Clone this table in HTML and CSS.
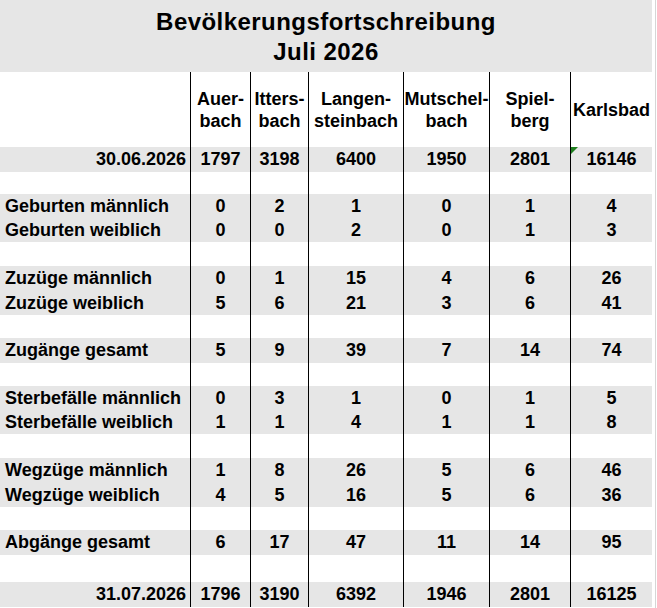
FILE: index.html
```html
<!DOCTYPE html>
<html lang="de">
<head>
<meta charset="utf-8">
<title>Bevölkerungsfortschreibung Juli 2026</title>
<link rel="stylesheet" href="styles.css">
</head>
<body>
<div class="page">
  <div class="sheet">
    <div class="title">
      <div>Bevölkerungsfortschreibung</div>
      <div>Juli 2026</div>
    </div>

    <div class="row head">
      <div class="lbl"></div>
      <div class="n">Auer-<br>bach</div>
      <div class="n">Itters-<br>bach</div>
      <div class="n">Langen-<br>steinbach</div>
      <div class="n">Mutschel-<br>bach</div>
      <div class="n">Spiel-<br>berg</div>
      <div class="n">Karlsbad</div>
    </div>

    <div class="row h25 g">
      <div class="lbl date">30.06.2026</div>
      <div class="n">1797</div><div class="n">3198</div><div class="n">6400</div><div class="n">1950</div><div class="n">2801</div><div class="n flag">16146</div>
    </div>
    <div class="row h22"><div class="lbl"></div><div class="n"></div><div class="n"></div><div class="n"></div><div class="n"></div><div class="n"></div><div class="n"></div></div>

    <div class="row h24 g">
      <div class="lbl">Geburten männlich</div>
      <div class="n">0</div><div class="n">2</div><div class="n">1</div><div class="n">0</div><div class="n">1</div><div class="n">4</div>
    </div>
    <div class="row h24 g">
      <div class="lbl">Geburten weiblich</div>
      <div class="n">0</div><div class="n">0</div><div class="n">2</div><div class="n">0</div><div class="n">1</div><div class="n">3</div>
    </div>
    <div class="row h24"><div class="lbl"></div><div class="n"></div><div class="n"></div><div class="n"></div><div class="n"></div><div class="n"></div><div class="n"></div></div>

    <div class="row h25 g">
      <div class="lbl">Zuzüge männlich</div>
      <div class="n">0</div><div class="n">1</div><div class="n">15</div><div class="n">4</div><div class="n">6</div><div class="n">26</div>
    </div>
    <div class="row h24 g">
      <div class="lbl">Zuzüge weiblich</div>
      <div class="n">5</div><div class="n">6</div><div class="n">21</div><div class="n">3</div><div class="n">6</div><div class="n">41</div>
    </div>
    <div class="row h23"><div class="lbl"></div><div class="n"></div><div class="n"></div><div class="n"></div><div class="n"></div><div class="n"></div><div class="n"></div></div>

    <div class="row h25 g">
      <div class="lbl">Zugänge gesamt</div>
      <div class="n">5</div><div class="n">9</div><div class="n">39</div><div class="n">7</div><div class="n">14</div><div class="n">74</div>
    </div>
    <div class="row h23"><div class="lbl"></div><div class="n"></div><div class="n"></div><div class="n"></div><div class="n"></div><div class="n"></div><div class="n"></div></div>

    <div class="row h24 g">
      <div class="lbl">Sterbefälle männlich</div>
      <div class="n">0</div><div class="n">3</div><div class="n">1</div><div class="n">0</div><div class="n">1</div><div class="n">5</div>
    </div>
    <div class="row h24 g">
      <div class="lbl">Sterbefälle weiblich</div>
      <div class="n">1</div><div class="n">1</div><div class="n">4</div><div class="n">1</div><div class="n">1</div><div class="n">8</div>
    </div>
    <div class="row h24"><div class="lbl"></div><div class="n"></div><div class="n"></div><div class="n"></div><div class="n"></div><div class="n"></div><div class="n"></div></div>

    <div class="row h25 g">
      <div class="lbl">Wegzüge männlich</div>
      <div class="n">1</div><div class="n">8</div><div class="n">26</div><div class="n">5</div><div class="n">6</div><div class="n">46</div>
    </div>
    <div class="row h24 g">
      <div class="lbl">Wegzüge weiblich</div>
      <div class="n">4</div><div class="n">5</div><div class="n">16</div><div class="n">5</div><div class="n">6</div><div class="n">36</div>
    </div>
    <div class="row h23"><div class="lbl"></div><div class="n"></div><div class="n"></div><div class="n"></div><div class="n"></div><div class="n"></div><div class="n"></div></div>

    <div class="row h25 g">
      <div class="lbl">Abgänge gesamt</div>
      <div class="n">6</div><div class="n">17</div><div class="n">47</div><div class="n">11</div><div class="n">14</div><div class="n">95</div>
    </div>
    <div class="row h27"><div class="lbl"></div><div class="n"></div><div class="n"></div><div class="n"></div><div class="n"></div><div class="n"></div><div class="n"></div></div>

    <div class="row h25 g">
      <div class="lbl date">31.07.2026</div>
      <div class="n">1796</div><div class="n">3190</div><div class="n">6392</div><div class="n">1946</div><div class="n">2801</div><div class="n">16125</div>
    </div>
  </div>
  <div class="gutter"></div>
</div>
</body>
</html>
```

FILE: styles.css
```css
html, body {
  margin: 0;
  padding: 0;
  background: #ffffff;
}

body {
  font-family: "Liberation Sans", Arial, sans-serif;
  font-weight: bold;
  font-size: 18px;
  color: #000000;
}

.page {
  display: flex;
  width: 657px;
  height: 608px;
}

.sheet {
  width: 652px;
  display: flex;
  flex-direction: column;
}

.gutter {
  width: 3px;
  border-right: 1px solid #d6d6d6;
}

.title {
  height: 72px;
  background: #e6e6e6;
  display: flex;
  flex-direction: column;
  justify-content: center;
  align-items: center;
  font-size: 24px;
  letter-spacing: 0.45px;
  line-height: 30px;
  padding-top: 1px;
  box-sizing: border-box;
}

.row {
  display: grid;
  grid-template-columns: 190px 60px 58px 95px 86px 81px 82px;
}

.row > div {
  display: flex;
  align-items: center;
  box-sizing: border-box;
  white-space: nowrap;
}

.head {
  height: 75px;
  line-height: 22px;
}

.h22 { height: 22px; }
.h23 { height: 23px; }
.h24 { height: 24px; }
.h25 { height: 25px; }
.h27 { height: 27px; }

.g { background: #e6e6e6; }

.lbl {
  padding-left: 5px;
  justify-content: flex-start;
}

.lbl.date {
  justify-content: flex-end;
  padding-right: 4px;
  padding-left: 0;
}

.n {
  border-left: 1px solid #000000;
  justify-content: center;
  text-align: center;
}

.head .n {
  padding-top: 1px;
}

.flag {
  position: relative;
}

.flag::before {
  content: "";
  position: absolute;
  left: 0;
  top: 0;
  width: 0;
  height: 0;
  border-top: 7px solid #1f7f1f;
  border-right: 7px solid transparent;
}
```
